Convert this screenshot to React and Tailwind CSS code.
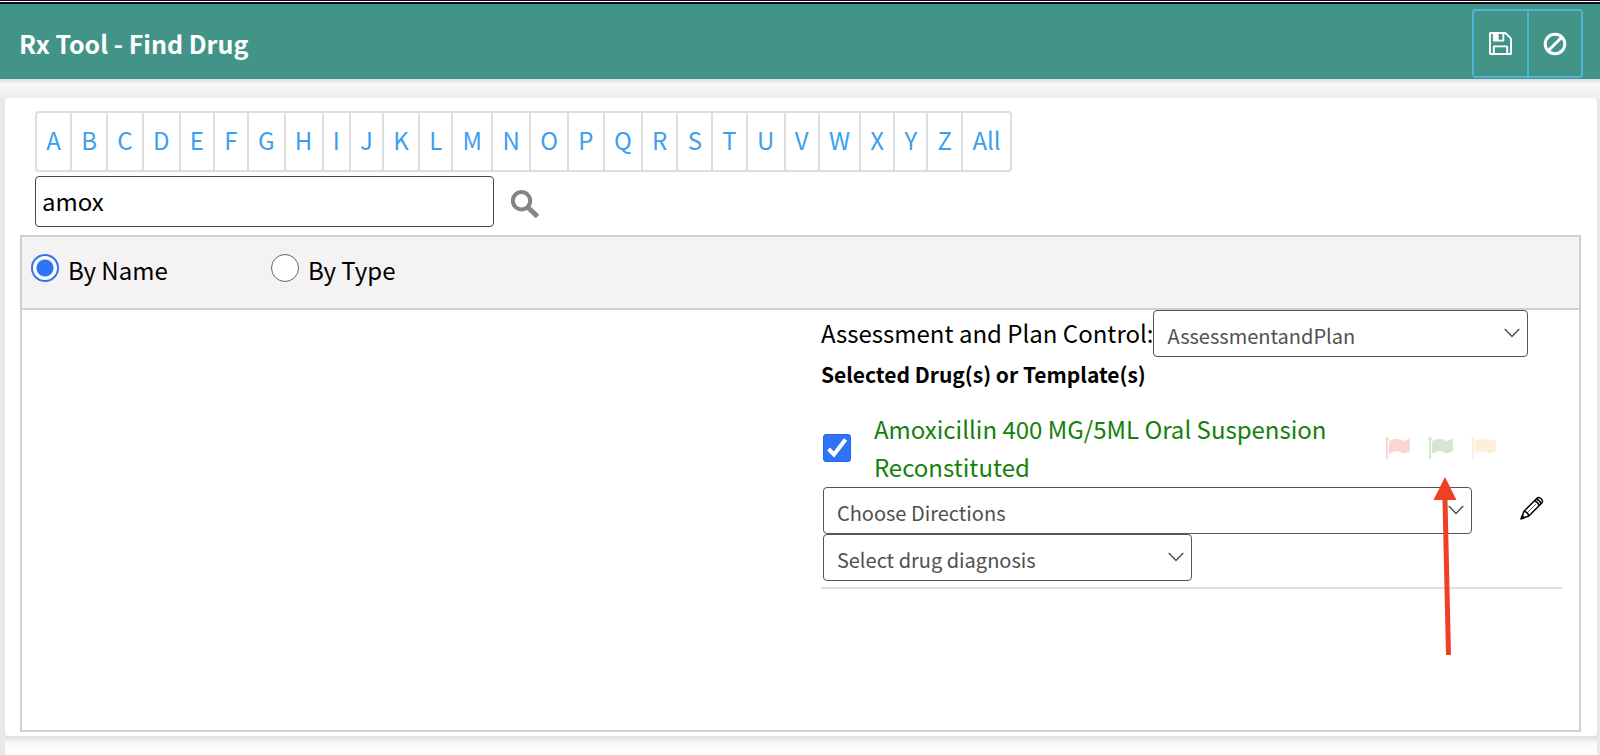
import React, { useState } from "react";

const LETTERS = [..."ABCDEFGHIJKLMNOPQRSTUVWXYZ", "All"];

const FLAGS = [
  { name: "Red flag", color: "text-[#fcd5d3]" },
  { name: "Green flag", color: "text-[#d6e6d2]" },
  { name: "Orange flag", color: "text-[#fdeeda]" },
];

const SaveIcon = () => (
  <svg viewBox="0 0 1536 1536" className="w-[23px] h-[23px]" fill="currentColor" aria-hidden="true">
    <path d="M384 1408h768v-384H384v384zm896 0h128V512q0-14-10-38.5t-20-34.5l-281-281q-10-10-34-20t-39-10v416q0 40-28 68t-68 28H352q-40 0-68-28t-28-68V128H128v1280h128V992q0-40 28-68t68-28h832q40 0 68 28t28 68v416zM896 480V160q0-13-9.5-22.5t-22.5-9.500H672q-13 0-22.5 9.500T640 160v320q0 13 9.500 22.500t22.500 9.500h192q13 0 22.500-9.500t9.500-22.500zm640 32v928q0 40-28 68t-68 28H96q-40 0-68-28t-28-68V96q0-40 28-68T96 0h928q40 0 88 20t76 48l280 280q28 28 48 76t20 88z" />
  </svg>
);

const BanIcon = () => (
  <svg viewBox="0 0 24 24" className="w-6 h-6" fill="none" stroke="currentColor" strokeWidth="3" aria-hidden="true">
    <circle cx="12" cy="12" r="9.8" />
    <path d="M5 19 19 5" />
  </svg>
);

const SearchIcon = () => (
  <svg viewBox="0 0 28 28" className="w-7 h-7" fill="none" stroke="#858585" aria-hidden="true">
    <circle cx="10.500" cy="10.800" r="8.700" strokeWidth="4" />
    <path d="M17 17.500 26.500 26.500" strokeWidth="5" />
  </svg>
);

const FlagIcon = () => (
  <svg viewBox="64 128 1728 1536" className="w-[25px] h-[22px]" fill="currentColor" aria-hidden="true">
    <path d="M320 256q0 72-64 110v1266q0 13-9.500 22.500t-22.500 9.500h-64q-13 0-22.500-9.500t-9.500-22.500v-1266q-64-38-64-110 0-53 37.500-90.500t90.500-37.500 90.500 37.500 37.500 90.500zm1472 64v763q0 25-12.500 38.500t-39.500 27.500q-215 116-369 116-61 0-123.500-22t-108.500-48-115.500-48-142.500-22q-192 0-464 146-17 9-33 9-26 0-45-19t-19-45v-742q0-32 31-55 21-14 79-43 236-120 421-120 107 0 200 29t219 88q38 19 88 19 54 0 117.500-21t110-47 88-47 54.500-21q26 0 45 19t19 45z" />
  </svg>
);

const PencilIcon = () => (
  <svg viewBox="0 0 24 24" className="w-6 h-6" fill="none" stroke="currentColor" strokeWidth="1.500" strokeLinejoin="round" aria-hidden="true">
    <path d="M1.200 22.800 4 15.200 17 2.200Q19 .6 21.200 2.800T21.800 7L8.800 20Z" />
    <path d="M4 15.200Q7.800 16 8.800 20M14.400 4.800Q18 5.800 19.200 9.600M16.200 3Q20 4 21 7.800" />
    <path d="M7.200 16.800 16.200 7.800" strokeWidth=".6" />
    <path d="M1.200 22.800 2.300 19.800 4.200 21.700Z" fill="currentColor" />
  </svg>
);

const Select = ({ label, value, className }) => (
  <div className={`relative ${className}`}>
    <select
      aria-label={label}
      className="block w-full h-[47px] appearance-none rounded-[4px] border border-[#555] bg-white pl-[13px] pr-10 pt-1 text-[20px] text-[#505050]"
    >
      <option>{value}</option>
    </select>
    <svg
      viewBox="0 0 16 10"
      className="pointer-events-none absolute right-2 top-[18px] w-4 h-[10px]"
      fill="none"
      stroke="#505050"
      strokeWidth="1.500"
      aria-hidden="true"
    >
      <path d="M.8 1 8 8.500 15.200 1" />
    </svg>
  </div>
);

const SearchMode = ({ id, label, checked, onChange }) => (
  <div className="flex w-60 items-start">
    <input
      type="radio"
      id={id}
      name="mode"
      checked={checked}
      onChange={onChange}
      className="size-7 appearance-none rounded-full border border-[#666] bg-white checked:border-2 checked:border-[#2f74f6] checked:bg-[radial-gradient(circle,#2f74f6_8px,#fff_9px)]"
    />
    <label htmlFor={id} className="ml-[9px] leading-8">{label}</label>
  </div>
);

const DrugItem = () => {
  const [checked, setChecked] = useState(true);

  return (
    <div className="relative border-b-2 border-[#e0dddd] pb-1.5">
      <div className="flex items-center">
        <div className="relative ml-0.5 size-7 shrink-0">
          <input
            type="checkbox"
            id="drug"
            checked={checked}
            onChange={(e) => setChecked(e.target.checked)}
            className="block size-7 appearance-none rounded-[3px] border border-[#666] bg-white checked:border-[#2268f0] checked:bg-[#2f74f6]"
          />
          {checked && (
            <svg viewBox="0 0 28 28" className="pointer-events-none absolute inset-0" fill="none" stroke="#fff" strokeWidth="4" aria-hidden="true">
              <path d="M5.500 15 11 20.500 22.500 5.500" />
            </svg>
          )}
        </div>
        <label htmlFor="drug" className="ml-[23px] flex-1 leading-[38px] text-[#15800a]">
          Amoxicillin 400 MG/5ML Oral Suspension Reconstituted
        </label>
        <div className="ml-5 mr-[66px] flex gap-[18px]">
          {FLAGS.map((flag) => (
            <button key={flag.name} type="button" aria-label={flag.name} className={flag.color}>
              <FlagIcon />
            </button>
          ))}
        </div>
      </div>
      <div className="ml-0.5 mt-px flex">
        <Select label="Directions" value="Choose Directions" className="flex-1" />
        <button type="button" aria-label="Edit directions" className="ml-12 mr-[18px] -mt-1.5 text-black">
          <PencilIcon />
        </button>
      </div>
      <Select label="Drug diagnosis" value="Select drug diagnosis" className="ml-0.5 w-[369px]" />
      {/* Callout arrow pointing at the green flag */}
      <svg viewBox="0 0 24 180" className="pointer-events-none absolute right-[105px] top-[67px] w-6 h-[180px]" fill="#ee4023" aria-hidden="true">
        <path d="M12 0 23.500 23H14.500L18 178H13L9.500 23H.5Z" />
      </svg>
    </div>
  );
};

const App = () => {
  const [query, setQuery] = useState("amox");
  const [mode, setMode] = useState("name");

  return (
    <div className="flex min-h-screen flex-col bg-white font-['Noto_Sans_CJK_SC','Noto_Sans',sans-serif] text-[24px] text-black">
      <div className="h-0.5 border-t border-[#0c0c18] bg-white" />
      <header className="flex items-start justify-between border-t-2 border-[#0c0c18] bg-[#429488] pl-[19px] pr-[17px] text-white">
        <h1 className="mt-[21px] text-[25px] font-bold leading-9">Rx Tool - Find Drug</h1>
        <div className="mt-[5px] mb-px flex h-[69px] divide-x-2 divide-[#4db5d8] rounded-[4px] border-2 border-[#4db5d8]">
          <button type="button" aria-label="Save" className="flex w-[55px] items-center justify-center">
            <SaveIcon />
          </button>
          <button type="button" aria-label="Cancel" className="flex w-[52px] items-center justify-center">
            <BanIcon />
          </button>
        </div>
      </header>
      <div className="h-[19px] bg-linear-to-b from-[#dcdcdc] via-[#f8f8f8] via-25% to-[#efefef]" />

      <div className="flex flex-1 flex-col bg-[#e8e8e8] pl-[5px] pr-[3px]">
        <main className="flex flex-1 flex-col rounded-[4px] bg-white pb-1 pl-[15px] pr-4 pt-[13px]">
          <nav className="ml-[15px] flex w-[977px] max-w-full divide-x-2 divide-[#dedede] rounded-[4px] border-2 border-[#dedede]">
            {LETTERS.map((letter) => (
              <a key={letter} href="#" className="flex-auto px-2 pb-[14px] pt-[11px] text-center leading-8 text-[#3b9fee]">
                {letter}
              </a>
            ))}
          </nav>
          <form className="ml-[15px] mt-1 flex items-start" onSubmit={(e) => e.preventDefault()}>
            <input
              type="text"
              aria-label="Drug name"
              value={query}
              onChange={(e) => setQuery(e.target.value)}
              className="h-[51px] w-[459px] rounded-[4px] border border-[#444] px-1.5 pb-0.5"
            />
            <button type="submit" aria-label="Search" className="ml-[17px] mt-[14px]">
              <SearchIcon />
            </button>
          </form>

          <section className="mt-2 flex flex-1 flex-col border-2 border-[#cfcfcf]">
            <div className="flex h-[73px] border-b-2 border-[#cfcfcf] bg-[#f4f2f3] pl-[9px] pt-[17px]">
              <SearchMode id="by-name" label="By Name" checked={mode === "name"} onChange={() => setMode("name")} />
              <SearchMode id="by-type" label="By Type" checked={mode === "type"} onChange={() => setMode("type")} />
            </div>
            <div className="flex flex-1">
              <div className="flex-1" />
              <div className="mr-[17px] w-[47.6%]">
                <div className="flex">
                  <span className="leading-[46px]">Assessment and Plan Control:</span>
                  <Select label="Assessment and Plan Control" value="AssessmentandPlan" className="w-[375px]" />
                </div>
                <h2 className="mb-[19px] text-[21px] font-bold leading-[34px]">Selected Drug(s) or Template(s)</h2>
                <DrugItem />
              </div>
            </div>
          </section>
        </main>
        <div className="h-[19px] bg-linear-to-b from-[#dedede] via-[#f9f9f9] via-40% to-white" />
      </div>
    </div>
  );
};

export default App;
